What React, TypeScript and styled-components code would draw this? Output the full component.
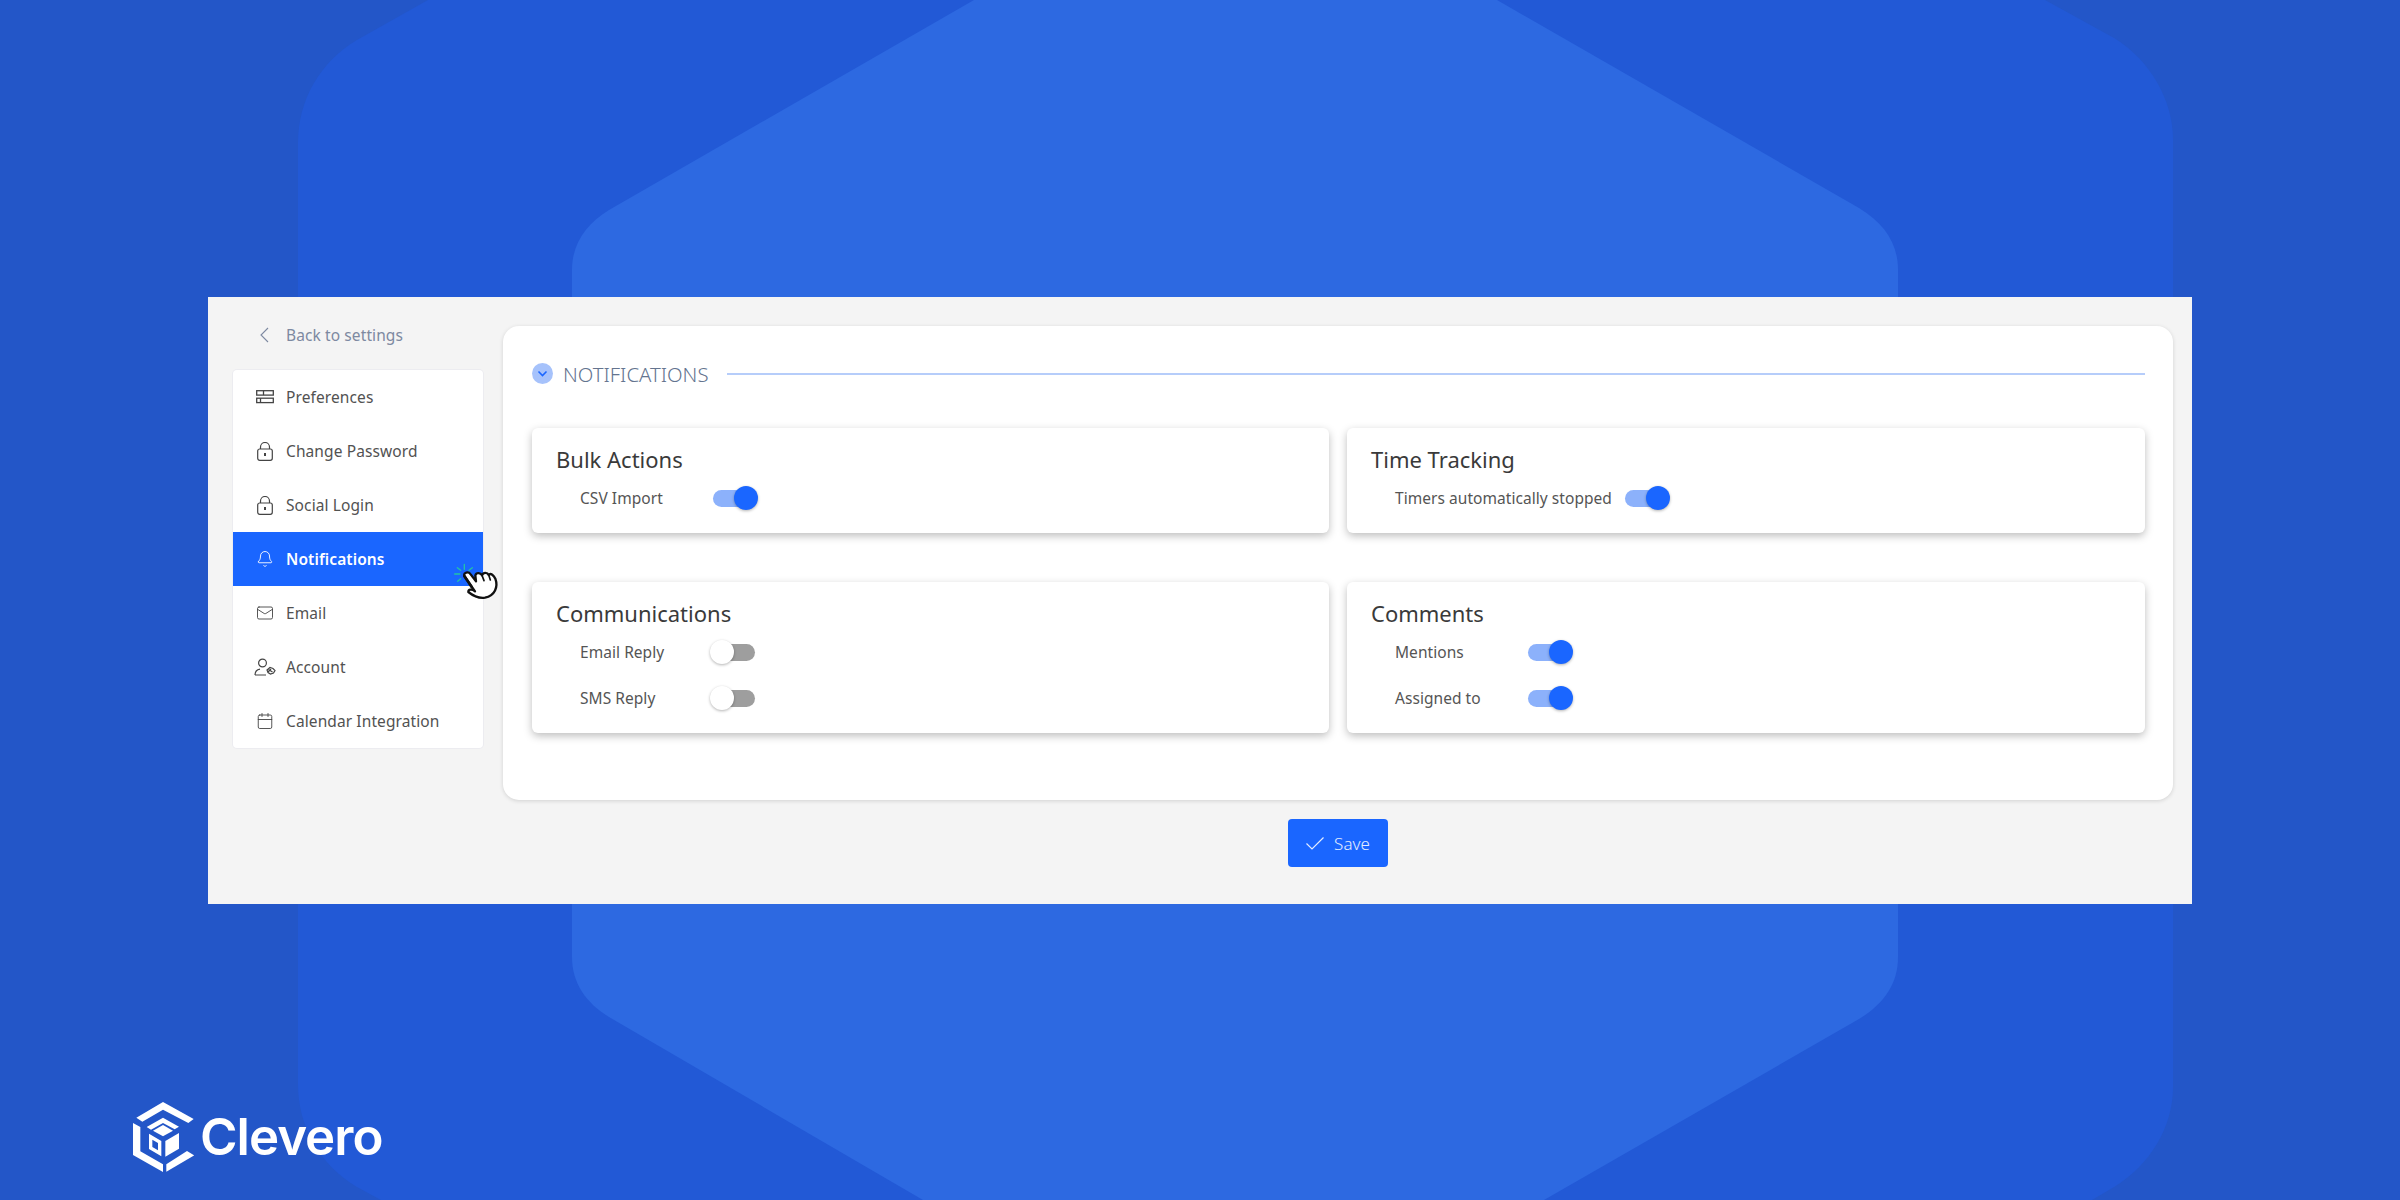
import React from 'react';
import styled, { createGlobalStyle } from 'styled-components';
import { Bell, Calendar, Mail } from 'lucide-react';

const GlobalStyle = createGlobalStyle`
  html, body { margin: 0; padding: 0; }
  body { font-family: "Noto Sans", "Open Sans", sans-serif; }
`;

const Page = styled.div`
  position: relative;
  width: 2400px;
  height: 1200px;
  overflow: hidden;
  background: #2356c8;
  box-sizing: border-box;
  padding: 297px 208px 0;
`;

const Backdrop = styled.svg`
  position: absolute;
  inset: 0;
`;

const Window = styled.div`
  position: relative;
  display: flex;
  width: 1984px;
  height: 607px;
  box-sizing: border-box;
  padding: 29px 19px 0 25px;
  gap: 20px;
  background: #f4f4f4;
`;

const Sidebar = styled.aside`
  width: 250px;
  flex: none;
`;

const BackLink = styled.div`
  display: flex;
  align-items: center;
  height: 44px;
  margin-top: -13px;
  margin-bottom: 13px;
  padding-left: 25px;
  gap: 16px;
  color: #7d89a1;
  font-size: 15.5px;
  letter-spacing: 0.1px;
`;

const Menu = styled.nav`
  background: #fff;
  border-radius: 4px;
  box-shadow: 0 0 0 1px #ececf0;
`;

const MenuItem = styled.div<{ $active?: boolean }>`
  position: relative;
  display: flex;
  align-items: center;
  height: 54px;
  font-size: 15.5px;
  letter-spacing: 0.1px;
  font-weight: ${p => (p.$active ? 600 : 400)};
  color: ${p => (p.$active ? '#fff' : '#525252')};
  background: ${p => (p.$active ? '#1a66ff' : 'transparent')};
`;

const MenuIcon = styled.span`
  display: flex;
  justify-content: center;
  width: 24px;
  margin: 0 9px 0 20px;
`;

const Cursor = styled.svg`
  position: absolute;
  left: 217px;
  top: 30px;
`;

const Content = styled.main`
  flex: 1;
  display: flex;
  flex-direction: column;
  align-items: center;
`;

const Panel = styled.section`
  width: 100%;
  height: 474px;
  box-sizing: border-box;
  padding: 37px 28px 0 29px;
  background: #fff;
  border-radius: 16px;
  box-shadow: 0 1px 4px rgba(0, 0, 0, 0.14);
`;

const SectionHead = styled.div`
  display: flex;
  align-items: center;
  height: 21px;
  margin-bottom: 44px;
`;

const Collapse = styled.span`
  display: flex;
  align-items: center;
  justify-content: center;
  width: 21px;
  height: 21px;
  margin-right: 10px;
  border-radius: 50%;
  background: #a6c2fb;
`;

const SectionTitle = styled.h2`
  margin: 0 19px 0 0;
  font-size: 20.3px;
  font-weight: 300;
  color: #64748f;
`;

const Rule = styled.div`
  flex: 1;
  height: 2px;
  background: #b6cdfa;
`;

const CardGrid = styled.div`
  display: grid;
  grid-template-columns: 797px 798px;
  grid-template-rows: 105px 151px;
  column-gap: 18px;
  row-gap: 49px;
`;

const Card = styled.div`
  box-sizing: border-box;
  padding: 16px 24px 0;
  background: #fff;
  border-radius: 6px;
  box-shadow: 0 3px 9px rgba(0, 0, 0, 0.26);
`;

const CardTitle = styled.h3`
  margin: 0;
  height: 31px;
  line-height: 31px;
  font-size: 22px;
  font-weight: 400;
  color: #3a3a3a;
`;

const Row = styled.div`
  display: flex;
  align-items: center;
  height: 46px;
  padding-left: 24px;
`;

const Label = styled.span`
  min-width: 130px;
  box-sizing: border-box;
  padding-right: 10px;
  font-size: 15.5px;
  letter-spacing: 0.05px;
  color: #555;
`;

const Toggle = styled.span`
  position: relative;
  display: block;
  width: 48px;
  height: 24px;
`;

const Track = styled.span<{ $on?: boolean }>`
  position: absolute;
  left: 3px;
  top: 4px;
  width: 42px;
  height: 17px;
  border-radius: 9px;
  background: ${p => (p.$on ? '#8cb1fb' : '#9e9e9e')};
`;

const Knob = styled.span<{ $on?: boolean }>`
  position: absolute;
  left: ${p => (p.$on ? 24 : 0)}px;
  top: 0;
  width: 24px;
  height: 24px;
  border-radius: 50%;
  background: ${p => (p.$on ? '#1a66ff' : '#fff')};
  box-shadow: 0 1px 3px rgba(0, 0, 0, 0.3);
`;

const SaveButton = styled.button`
  display: flex;
  align-items: center;
  justify-content: center;
  gap: 10px;
  width: 100px;
  height: 48px;
  margin-top: 19px;
  padding: 0;
  border: 0;
  border-radius: 4px;
  background: #1a66ff;
  color: #e3ecff;
  font-family: inherit;
  font-size: 17px;
  font-weight: 300;
`;

const Logo = styled.div`
  position: absolute;
  left: 133px;
  top: 1102px;
  display: flex;
  align-items: center;
  gap: 6px;
`;

const LogoText = styled.span`
  font-family: Inter, "Liberation Sans", sans-serif;
  font-size: 51px;
  line-height: 70px;
  font-weight: 600;
  letter-spacing: -1px;
  color: #fff;
`;

function PrefsIcon() {
  return (
    <svg width="18" height="14" viewBox="0 0 18 14" fill="none" stroke="#444" strokeWidth="1.3">
      <rect x="0.7" y="0.7" width="16.6" height="4.4" />
      <path d="M7.5 0.7v4.4" />
      <rect x="0.7" y="8.2" width="16.6" height="4.4" />
      <path d="M4.5 8.2v4.4" />
    </svg>
  );
}

function LockIcon() {
  return (
    <svg width="16" height="19" viewBox="0 0 16 19" fill="none" stroke="#444" strokeWidth="1.2">
      <rect x="0.7" y="7" width="14.6" height="11.300" rx="2" />
      <path d="M3.500 7V5a4.500 4.500 0 0 1 9 0v2" />
      <path d="M8 11v3" strokeWidth="2" />
    </svg>
  );
}

function AccountIcon() {
  return (
    <svg width="22" height="18" viewBox="0 0 22 18" fill="none" stroke="#444" strokeWidth="1.2">
      <circle cx="8.5" cy="5" r="3.9" />
      <path d="M1 17c0-3.600 2.400-5.400 5-5.800M1 17h11" />
      <path d="M13 12l3-2.500 3 1 2 2-1.500 2.500-3 1-2.500-1.500z" />
      <path d="M14.500 11.500l4 2.500M14 14l3-3" />
    </svg>
  );
}

function ChevronBack() {
  return (
    <svg width="12" height="16" viewBox="0 0 12 16" fill="none" stroke="#7d89a1" strokeWidth="1.1">
      <polyline points="10,1 3,8 10,15" />
    </svg>
  );
}

function HandCursor() {
  return (
    <Cursor width="50" height="40" viewBox="690 250 150 120">
      <g stroke="#22c3a6" strokeWidth="4" strokeLinecap="round">
        <path d="M733 257v15M712 267l10 8M757 267l-10 8M704 286h16M713 308l9-8" />
      </g>
      <path
        d="M733 292c-3-11 12-15 19-5l16 21-2-18c3-10 16-8 20 0 4-10 16-9 20-1 6-8 16 2 20 11 9 25-1 50-31 57-20 3-35-5-50-17 0-8 10-10 20-2z"
        fill="#fff"
        stroke="#111"
        strokeWidth="7"
        strokeLinejoin="round"
      />
      <path d="M733 292l22 33" fill="none" stroke="#111" strokeWidth="8" strokeLinecap="round" />
      <path d="M786 290l6 16M806 288l5 16" fill="none" stroke="#111" strokeWidth="5" strokeLinecap="round" />
    </Cursor>
  );
}

function LogoMark() {
  return (
    <svg width="61" height="70" viewBox="70 65 183 210" fill="#fff">
      <path d="M160 65l92 51-16 12-76-40-62 36-18-12z" />
      <path d="M70 128l22 12v73l68 39v23l-90-51z" />
      <path d="M170 252l62-40 22 13-84 49z" />
      <path d="M160 112l48 27-13 8-35-19-36 20-13-8z" />
      <path d="M160 134l30 17-30 17-30-17z" />
      <path fillRule="evenodd" d="M118 160l37 22v46l-37-22zM128 178v22l17 10v-22z" />
      <path d="M167 182l41-24v47l-41 24z" />
    </svg>
  );
}

const iconProps = { size: 18, strokeWidth: 1.2, color: '#444' };

const menu = [
  { label: 'Preferences', icon: <PrefsIcon /> },
  { label: 'Change Password', icon: <LockIcon /> },
  { label: 'Social Login', icon: <LockIcon /> },
  { label: 'Notifications', icon: <Bell {...iconProps} color="#fff" />, active: true },
  { label: 'Email', icon: <Mail {...iconProps} /> },
  { label: 'Account', icon: <AccountIcon /> },
  { label: 'Calendar Integration', icon: <Calendar {...iconProps} /> },
];

const cards = [
  { title: 'Bulk Actions', rows: [{ label: 'CSV Import', on: true }] },
  { title: 'Time Tracking', rows: [{ label: 'Timers automatically stopped', on: true }] },
  {
    title: 'Communications',
    rows: [
      { label: 'Email Reply', on: false },
      { label: 'SMS Reply', on: false },
    ],
  },
  {
    title: 'Comments',
    rows: [
      { label: 'Mentions', on: true },
      { label: 'Assigned to', on: true },
    ],
  },
];

export default function App() {
  return (
    <Page>
      <GlobalStyle />
      <Backdrop width="2400" height="1200" viewBox="0 0 2400 1200">
        <path
          d="M428 0L357 40C320 62 298 100 298 143V1084C298 1127 320 1165 357 1187L381 1200H2092L2114 1187C2150 1165 2173 1127 2173 1087V140C2173 100 2150 60 2114 38L2045 0Z"
          fill="#2259d6"
        />
        <path
          d="M974 0L609 210C586 224 572 244 572 270V957C572 983 586 1003 609 1017L923 1200H1544L1859 1019C1885 1003 1898 983 1898 957V270C1898 244 1885 224 1859 208L1497 0Z"
          fill="#2d69e1"
        />
      </Backdrop>
      <Window>
        <Sidebar>
          <BackLink>
            <ChevronBack />
            Back to settings
          </BackLink>
          <Menu>
            {menu.map(item => (
              <MenuItem key={item.label} $active={item.active}>
                <MenuIcon>{item.icon}</MenuIcon>
                {item.label}
                {item.active && <HandCursor />}
              </MenuItem>
            ))}
          </Menu>
        </Sidebar>
        <Content>
          <Panel>
            <SectionHead>
              <Collapse>
                <svg width="11" height="8" viewBox="0 0 11 8" fill="none" stroke="#1a66ff" strokeWidth="1.6">
                  <polyline points="1.500,1.500 5.500,5.500 9.500,1.500" />
                </svg>
              </Collapse>
              <SectionTitle>NOTIFICATIONS</SectionTitle>
              <Rule />
            </SectionHead>
            <CardGrid>
              {cards.map(card => (
                <Card key={card.title}>
                  <CardTitle>{card.title}</CardTitle>
                  {card.rows.map(row => (
                    <Row key={row.label}>
                      <Label>{row.label}</Label>
                      <Toggle>
                        <Track $on={row.on} />
                        <Knob $on={row.on} />
                      </Toggle>
                    </Row>
                  ))}
                </Card>
              ))}
            </CardGrid>
          </Panel>
          <SaveButton>
            <svg width="18" height="13" viewBox="0 0 18 13" fill="none" stroke="#e3ecff" strokeWidth="1.2">
              <polyline points="0.500,6.500 6,12 17.500,0.500" />
            </svg>
            Save
          </SaveButton>
        </Content>
      </Window>
      <Logo>
        <LogoMark />
        <LogoText>Clevero</LogoText>
      </Logo>
    </Page>
  );
}
